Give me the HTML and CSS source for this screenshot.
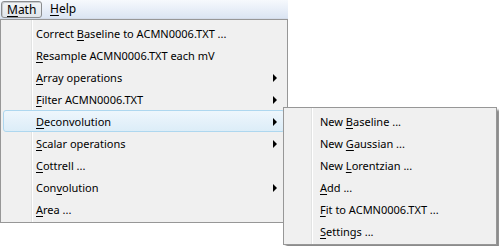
FILE: index.html
```html
<!DOCTYPE html>
<html>
<head>
    <meta charset="utf-8">
    <meta name="viewport" content="width=device-width">
    <title>Math menu</title>
    <link rel="stylesheet" href="styles.css">
</head>
<body>
    <div class="menubar">
        <span class="top open"><u>M</u>ath</span>
        <span class="top"><u>H</u>elp</span>
    </div>

    <ul class="menu main">
        <li>Correct <u>B</u>aseline to ACMN0006.TXT ...</li>
        <li><u>R</u>esample ACMN0006.TXT each mV</li>
        <li class="sub"><u>A</u>rray operations</li>
        <li class="sub"><u>F</u>ilter ACMN0006.TXT</li>
        <li class="sub hot"><u>D</u>econvolution
            <ul class="menu submenu">
                <li>New <u>B</u>aseline ...</li>
                <li>New <u>G</u>aussian ...</li>
                <li>New <u>L</u>orentzian ...</li>
                <li><u>A</u>dd ...</li>
                <li><u>F</u>it to ACMN0006.TXT ...</li>
                <li><u>S</u>ettings ...</li>
            </ul>
        </li>
        <li class="sub"><u>S</u>calar operations</li>
        <li><u>C</u>ottrell ...</li>
        <li class="sub">Con<u>v</u>olution</li>
        <li><u>A</u>rea ...</li>
    </ul>
</body>
</html>
```

FILE: styles.css
```css
html, body {
    height: 246px;
}

body {
    margin: 0;
    background: #fff;
    font-family: "Noto Sans", sans-serif;
    font-size: 11px;
    color: #000;
}

u {
    text-decoration-thickness: 1px;
    text-underline-offset: 2px;
}

.menubar {
    width: 288px;
    height: 19px;
    display: flex;
    align-items: center;
    gap: 2px;
    background: linear-gradient(#f6f9fd, #dbe5f3);
    border-bottom: 1px solid #d4dcea;
    box-sizing: border-box;
}

.top {
    height: 17px;
    line-height: 16px;
    padding: 0 6px;
    box-sizing: border-box;
    font-size: 12px;
}

.top.open {
    margin-left: 1px;
    width: 41px;
    border: 1px solid #8a8c8e;
    border-radius: 3px;
    background: linear-gradient(#f2f4f6, #e1e5ea);
    box-shadow: inset 1px 1px 0 #c8cbcf;
    padding-left: 5px;
}

.menu {
    list-style: none;
    margin: 0;
    padding: 2px;
    background: #f0f0f0;
    border: 1px solid #979797;
}

.menu li {
    height: 22px;
    line-height: 21px;
    position: relative;
    box-sizing: border-box;
    border: 1px solid transparent;
    border-radius: 3px;
}

.main {
    width: 288px;
    box-sizing: border-box;
    background: #f0f0f0 linear-gradient(to right, transparent 30px, #e2e3e3 30px, #e2e3e3 31px, #fff 31px, #fff 32px, transparent 32px);
}

.main > li {
    padding-left: 32px;
}

.sub::after {
    content: "";
    position: absolute;
    right: 7px;
    top: 7px;
    border-left: 4px solid #000;
    border-top: 4px solid transparent;
    border-bottom: 4px solid transparent;
}

.main > li.hot {
    border-color: #aed7ef;
    background: linear-gradient(#eef6fc, #dcedf8);
}

.submenu {
    position: absolute;
    left: 279px;
    top: -4px;
    width: 214px;
    box-sizing: border-box;
    background: #f0f0f0 linear-gradient(to right, transparent 27px, #e2e3e3 27px, #e2e3e3 28px, #fff 28px, #fff 29px, transparent 29px);
    box-shadow: 3px 3px 2px rgba(0, 0, 0, 0.45);
}

.submenu li {
    padding-left: 33px;
}
```
